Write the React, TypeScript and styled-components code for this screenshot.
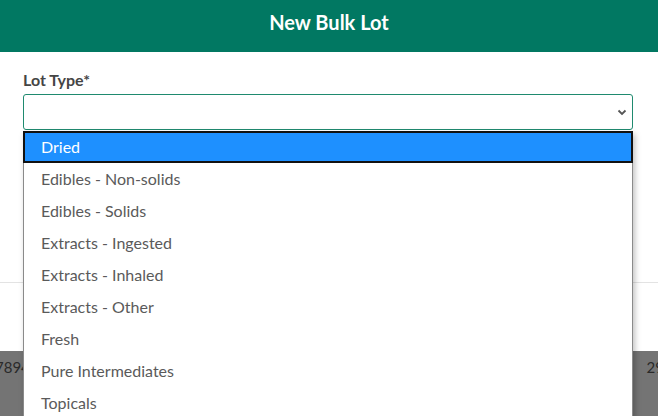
import React from 'react'
import styled, { createGlobalStyle } from 'styled-components'

const GlobalStyle = createGlobalStyle`
    html, body {
        margin: 0;
        padding: 0;
        background: #ffffff;
        font-family: Lato, "Open Sans", sans-serif;
        overflow: hidden;
    }
`

const Screen = styled.div`
    width: 658px;
    height: 416px;
    display: flex;
    flex-direction: column;
    position: relative;
    overflow: hidden;
`

const Modal = styled.div`
    background: #ffffff;
    display: flex;
    flex-direction: column;
`

const Header = styled.div`
    height: 52px;
    background: #017862;
    color: #ffffff;
    display: flex;
    align-items: center;
    justify-content: center;
    font-size: 20px;
    font-weight: 700;
    padding-bottom: 8px;
    box-sizing: border-box;
`

const Body = styled.div`
    padding: 18px 25px 0 23px;
    height: 230px;
    box-sizing: border-box;
    position: relative;
`

const Label = styled.div`
    font-size: 16px;
    font-weight: 700;
    color: #454545;
    margin-bottom: 5px;
`

const SelectBox = styled.div`
    height: 36px;
    border: 1px solid #1f8a6f;
    border-radius: 3px;
    box-sizing: border-box;
    display: flex;
    align-items: center;
    justify-content: flex-end;
    padding-right: 4px;
    color: #555;
`

const Footer = styled.div`
    border-top: 1px solid #e3e3e3;
    height: 68px;
`

const Backdrop = styled.div`
    flex: 1;
    background: #747474;
    display: flex;
    justify-content: space-between;
    padding-top: 7px;
    font-size: 15px;
    color: #2a2a2a;
`

const CutText = styled.span<{ $side: 'left' | 'right' }>`
    margin-${(p) => p.$side}: ${(p) => (p.$side === 'left' ? '-5px' : '-6px')};
`

const List = styled.div`
    position: absolute;
    left: 23px;
    top: 131px;
    width: 610px;
    background: #ffffff;
    border-left: 1px solid #8a8a8a;
    border-right: 1px solid #8a8a8a;
    box-sizing: border-box;
    box-shadow: 2px 3px 6px rgba(0, 0, 0, 0.25);
`

const Option = styled.div<{ $active?: boolean }>`
    height: 32px;
    box-sizing: border-box;
    display: flex;
    align-items: center;
    padding-left: 16px;
    padding-bottom: 2px;
    font-size: 16px;
    color: ${(p) => (p.$active ? '#ffffff' : '#5a5a5a')};
    background: ${(p) => (p.$active ? '#1e90ff' : 'transparent')};
    border: 2px solid ${(p) => (p.$active ? '#111' : 'transparent')};
    margin: 0 -1px;
`

const Chevron = () => (
    <svg width="12" height="12" viewBox="0 0 12 12">
        <path d="M2.5 4.5 L6 8 L9.5 4.5" fill="none" stroke="#555" strokeWidth="1.8" />
    </svg>
)

const options = [
    'Dried',
    'Edibles - Non-solids',
    'Edibles - Solids',
    'Extracts - Ingested',
    'Extracts - Inhaled',
    'Extracts - Other',
    'Fresh',
    'Pure Intermediates',
    'Topicals',
]

export default function App() {
    return (
        <Screen>
            <GlobalStyle />
            <Modal>
                <Header>New Bulk Lot</Header>
                <Body>
                    <Label>Lot Type*</Label>
                    <SelectBox>
                        <Chevron />
                    </SelectBox>
                </Body>
                <Footer />
            </Modal>
            <Backdrop>
                <CutText $side="left">7894</CutText>
                <CutText $side="right">29</CutText>
            </Backdrop>
            <List>
                {options.map((o, i) => (
                    <Option key={o} $active={i === 0}>
                        {o}
                    </Option>
                ))}
            </List>
        </Screen>
    )
}
